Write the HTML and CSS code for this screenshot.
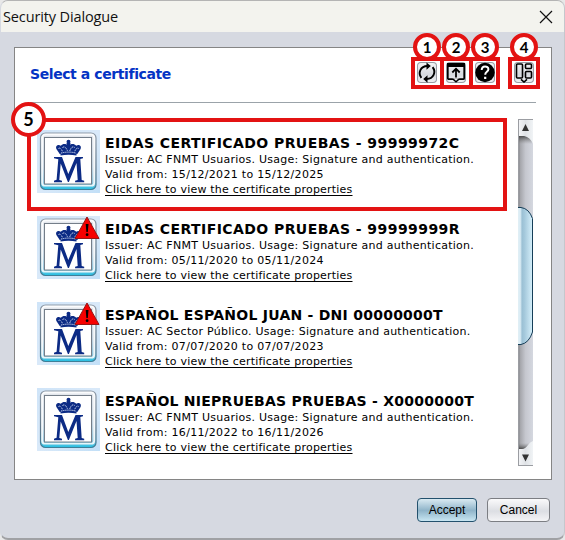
FILE: index.html
```
<!DOCTYPE html>
<html lang="en">
<head>
<meta charset="utf-8">
<title>Security Dialogue</title>
<link rel="stylesheet" href="styles.css">
</head>
<body>
<svg class="defs" width="0" height="0">
  <defs>
    <linearGradient id="frame" x1="0" y1="0" x2="0" y2="1"><stop offset="0" stop-color="#e6e9ee"/><stop offset=".6" stop-color="#c3d3e0"/><stop offset=".88" stop-color="#8fc5dc"/><stop offset="1" stop-color="#1fc0e4"/></linearGradient>
    <linearGradient id="edge" x1="0" y1="0" x2="0" y2="1"><stop offset="0" stop-color="#8f9ba8"/><stop offset=".7" stop-color="#5f7688"/><stop offset="1" stop-color="#3f7f98"/></linearGradient>
    <linearGradient id="glow" x1="0" y1="0" x2="1" y2="1"><stop offset="0" stop-color="#cfe4f8"/><stop offset=".5" stop-color="#d9e9f9"/><stop offset="1" stop-color="#c2dff7"/></linearGradient>
    <symbol id="cert" viewBox="0 0 63 63">
      <rect width="63" height="63" fill="url(#glow)"/>
      <rect x="3.500" y="3" width="55.500" height="56.500" rx="5" fill="url(#frame)" stroke="url(#edge)" stroke-width="1.200"/>
      <rect x="5.200" y="4.700" width="52" height="51" rx="3" fill="none" stroke="#fff" stroke-width="1.800" opacity=".85"/>
      <rect x="7.500" y="7.500" width="47" height="46.500" fill="#fff" stroke="#747e89"/>
      <g fill="#0c2b85">
        <path transform="translate(0 -6) scale(1 1.125)" d="M17 29.300h8l6.300 15.200L38.500 29.300H46v1.200l-2.700.7 1.400 18.500 2.500.7v1.300h-9.100v-1.300l2.600-.7-1.200-15-7.600 16.800h-1l-7.200-16.500-1.400 14.700 2.700.7v1.300h-8v-1.300l2.600-.8 1.700-18.200-4.300-.9z"/>
        <circle cx="31.500" cy="11.800" r="2"/><path d="M29.500 13h4l-.8 6h-2.400z"/>
        <path d="M22.700 24l-3.300-5c-1.300-3 1.700-5 4.400-3.200 2-2.500 5-2.200 7.700-.3 2.700-1.900 5.700-2.200 7.700.3 2.700-1.800 5.700.2 4.400 3.200L40.300 24q-8.800-2-17.600 0z"/>
        <path d="M23.500 23.500q8-2 16 0v2q-8-1.300-16 0z"/>
      </g>
      <path d="M21.500 18.500q2-1.500 3.800 2.700M25.500 17.500q3-2 5 3.500M32.700 21q2-5.500 5-3.500M37.800 21.200q2-4.200 3.800-2.700M24 23q7.500-1.800 15 0" fill="none" stroke="#dfe8fb" stroke-width=".9" stroke-dasharray="1.400 .7"/>
    </symbol>
    <symbol id="warn" viewBox="0 0 26 24"><path d="M13 1L25 22.500H1z" fill="#f60000" stroke="#951414"/><path d="M11.700 8h2.800l-.7 8h-1.400z"/><circle cx="13.100" cy="18.700" r="1.400"/></symbol>
  </defs>
</svg>
<div class="window">
  <header class="titlebar"><span>Security Dialogue</span>
    <svg width="14" height="14" viewBox="0 0 14 14"><path d="M1 1l12 12M13 1L1 13" stroke="#111" stroke-width="1.200"/></svg>
  </header>
  <main class="panel">
    <div class="head">
      <h1>Select a certificate</h1>
      <div class="tools">
        <div class="tool"><b class="num">1</b><svg class="btn" viewBox="0 0 20 21"><g fill="none" stroke="#000" stroke-width="1.900"><path d="M4.400 15.800C.6 11 3.500 4 10.400 4M15.600 5.200c3.800 4.800.9 11.800-6 11.800"/></g><path d="M9.500.4l4.300 3.600-4.300 3.700zM10.500 13.300v7.400L6.200 17z"/></svg></div>
        <div class="tool"><b class="num">2</b><svg class="btn" viewBox="0 0 20 21"><rect x="1.800" y="1.800" width="16.400" height="15.400" rx="1" fill="none" stroke="#000" stroke-width="1.700"/><path d="M1 1h18v4H1z"/><path d="M10 6.500V15.500M6.300 10.500L10 6.700l3.700 3.800" fill="none" stroke="#000" stroke-width="1.800"/><path d="M6.500 16.200h7L10 19z" fill="#e8eaed"/><path d="M6.800 17l3.200 2.800 3.200-2.800" fill="none" stroke="#000" stroke-width="1.500"/></svg></div>
        <div class="tool last"><b class="num">3</b><svg class="btn" viewBox="0 0 20 21"><circle cx="10" cy="10.500" r="9.700"/><path d="M6.700 8.100c0-5 6.700-4.500 6.700-.8 0 2.500-3.200 2.600-3.200 5.400" fill="none" stroke="#fff" stroke-width="2"/><path d="M9.100 14.700h2.200v2.200H9.100z" fill="#fff"/></svg></div>
        <div class="tool solo"><b class="num">4</b><svg class="btn" viewBox="0 0 20 21"><g fill="none" stroke="#000" stroke-width="1.600"><rect x="2.500" y="2" width="6" height="14" rx="1"/><rect x="11.500" y="2" width="6" height="4.500" rx="1"/><rect x="11.500" y="9.500" width="6" height="6.500" rx="1"/><path d="M7 17.300l3 2.700 3-2.700"/></g></svg></div>
      </div>
    </div>
    <div class="body">
      <ul class="list">
        <li class="row"><div class="icon"><svg width="63" height="63"><use href="#cert"/></svg></div><div><h2>EIDAS CERTIFICADO PRUEBAS - 99999972C</h2><p>Issuer: AC FNMT Usuarios. Usage: Signature and authentication.</p><p class="dates">Valid from: 15/12/2021 to 15/12/2025</p><a>Click here to view the certificate properties</a></div>
          <div class="mark"><b>5</b></div></li>
        <li class="row"><div class="icon"><svg width="63" height="63"><use href="#cert"/></svg><svg class="warn"><use href="#warn"/></svg></div><div><h2>EIDAS CERTIFICADO PRUEBAS - 99999999R</h2><p>Issuer: AC FNMT Usuarios. Usage: Signature and authentication.</p><p class="dates">Valid from: 05/11/2020 to 05/11/2024</p><a>Click here to view the certificate properties</a></div></li>
        <li class="row"><div class="icon"><svg width="63" height="63"><use href="#cert"/></svg><svg class="warn"><use href="#warn"/></svg></div><div><h2 class="snug">ESPAÑOL ESPAÑOL JUAN - DNI 00000000T</h2><p>Issuer: AC Sector Público. Usage: Signature and authentication.</p><p class="dates">Valid from: 07/07/2020 to 07/07/2023</p><a>Click here to view the certificate properties</a></div></li>
        <li class="row"><div class="icon"><svg width="63" height="63"><use href="#cert"/></svg></div><div><h2 class="snug">ESPAÑOL NIEPRUEBAS PRUEBAS - X0000000T</h2><p>Issuer: AC FNMT Usuarios. Usage: Signature and authentication.</p><p class="dates">Valid from: 16/11/2022 to 16/11/2026</p><a>Click here to view the certificate properties</a></div></li>
      </ul>
      <svg class="scroll" width="15" height="347" viewBox="0 0 15 347">
        <defs><linearGradient id="track"><stop offset="0" stop-color="#77797e"/><stop offset=".15" stop-color="#a5a6ab"/><stop offset=".5" stop-color="#c5c7ce"/><stop offset="1" stop-color="#d5d8e0"/></linearGradient>
        <linearGradient id="thumb"><stop offset="0" stop-color="#e2f0f6"/><stop offset=".16" stop-color="#d9ebf4"/><stop offset=".28" stop-color="#9bc0d4"/><stop offset=".45" stop-color="#a5c9dc"/><stop offset="1" stop-color="#d6f0fb"/></linearGradient>
        <linearGradient id="cap"><stop offset="0" stop-color="#f5f6f8"/><stop offset=".5" stop-color="#dfe2e6"/><stop offset="1" stop-color="#f1f4f6"/></linearGradient>
        <linearGradient id="shade" x2="0" y2="1"><stop offset="0" stop-color="#333" stop-opacity=".8"/><stop offset="1" stop-color="#777" stop-opacity="0"/></linearGradient>
        <linearGradient id="shade-end" x2="0" y2="1"><stop offset="0" stop-color="#777" stop-opacity="0"/><stop offset="1" stop-color="#333" stop-opacity=".8"/></linearGradient></defs>
        <rect width="15" height="347" fill="url(#cap)"/>
        <path d="M0 17h6q6 1 9 8v297q-3 1-5 4-3 4-6 4H0z" fill="url(#track)"/>
        <path d="M0 17h6q6 1 9 8H0z" fill="url(#shade)"/>
        <path d="M0 324h11.500l-1.500 2q-3 4-6 4H0z" fill="url(#shade-end)"/>
        <path d="M.5 0v347M0 .5h15M0 346.500h15" stroke="#9b9da2" fill="none"/>
        <path d="M0 88.500h3q8 1 11.500 11V213q-3.500 11-11.500 12.500H0" fill="url(#thumb)" stroke="#163e58"/>
        <path d="M4 12l3.500-7L11 12zM4 335.500h7l-3.500 7z" fill="#333"/>
      </svg>
    </div>
  </main>
  <footer><button class="primary">Accept</button><button>Cancel</button></footer>
</div>
</body>
</html>
```
FILE: styles.css
```
* { box-sizing: border-box; }
body { margin: 0; background: #e8e8e8; overflow: hidden; }
.defs { position: absolute; }
.window { width: 565px; height: 540px; background: #d6d9e1; border: 1px solid #b4b4b4; border-left-color: #d6d9e1; border-right-color: #c5c7cc; border-bottom: 2px solid #a0a1a4; border-radius: 8px; overflow: hidden; display: flex; flex-direction: column; }
.titlebar { height: 31px; flex: none; background: #f3f3ee; display: flex; align-items: center; justify-content: space-between; padding: 0 11px 0 2px; font: 14.5px "Open Sans", "Noto Sans", sans-serif; letter-spacing: -.13px; color: #111; }
.panel { margin: 15px 12px 0 13px; height: 433px; flex: none; background: #fff; border: 1px solid #858585; padding: 0 15px; font-family: "DejaVu Sans", sans-serif; }
.head { height: 55px; border-bottom: 1px solid #9ba3a9; display: flex; justify-content: space-between; align-items: flex-start; }
h1 { margin: 17px 0 0; font-size: 14px; line-height: 18px; color: #0433c4; letter-spacing: -.41px; white-space: nowrap; }
.tools { display: flex; margin: 9px -4px 0 0; }
.tool { position: relative; width: 29px; height: 32px; border: 4px solid #e31313; border-right: 0; padding: 1px 0 0 2px; }
.tool.last { width: 31px; border-right: 4px solid #e31313; }
.tool.solo { width: 32px; border-right: 4px solid #e31313; margin-left: 8px; }
.btn { display: block; width: 20px; height: 21px; background: linear-gradient(#f5f5f6, #d6d9df 60%, #f2f3f5); border-radius: 4px; box-shadow: inset 0 0 0 1px #999ca4; }
.num { position: absolute; z-index: 2; left: -2px; top: -28px; width: 28px; height: 28px; border: 4px solid #e31313; border-radius: 50%; background: #fff; font: bold 15px/20px Lato, sans-serif; text-align: center; }
.body { display: flex; justify-content: space-between; margin: 16px 3px 0 7px; }
.list { list-style: none; margin: 0; padding: 11px 0 0; }
.row { position: relative; display: flex; gap: 5px; height: 86px; font-size: 11px; white-space: nowrap; }
.icon { position: relative; width: 63px; height: 63px; }
.icon > svg { display: block; }
.icon > .warn { position: absolute; left: 37px; top: 0; width: 26px; height: 24px; }
h2 { margin: 5px 0 0; font-size: 14px; line-height: 17px; letter-spacing: .43px; }
h2.snug { letter-spacing: .25px; }
p { margin: 0; line-height: 15px; letter-spacing: .26px; }
.dates { letter-spacing: .31px; }
.row a { display: block; line-height: 15px; width: max-content; letter-spacing: .21px; text-decoration: underline; text-underline-offset: 2px; }
.mark { position: absolute; left: -10px; top: -12px; width: 480px; height: 93px; border: 4px solid #e31313; }
.mark b { position: absolute; left: -20px; top: -20px; width: 35px; height: 35px; border: 4px solid #e31313; border-radius: 50%; background: #fff; font: bold 18px/27px Lato, sans-serif; text-align: center; }
.scroll { display: block; }
footer { display: flex; justify-content: flex-end; gap: 10px; padding: 18px 14px 0 0; }
button { width: 63px; height: 24px; padding: 0; border: 1px solid #7c7e83; border-radius: 4px; background: linear-gradient(#fafafb, #dcdee3 55%, #f4f4f6); font: 12px "Liberation Sans", sans-serif; color: #000; }
button.primary { width: 60px; border-color: #23516d; background: linear-gradient(#d9eaf2, #8fb4c9 52%, #c8e6f2); }
```
